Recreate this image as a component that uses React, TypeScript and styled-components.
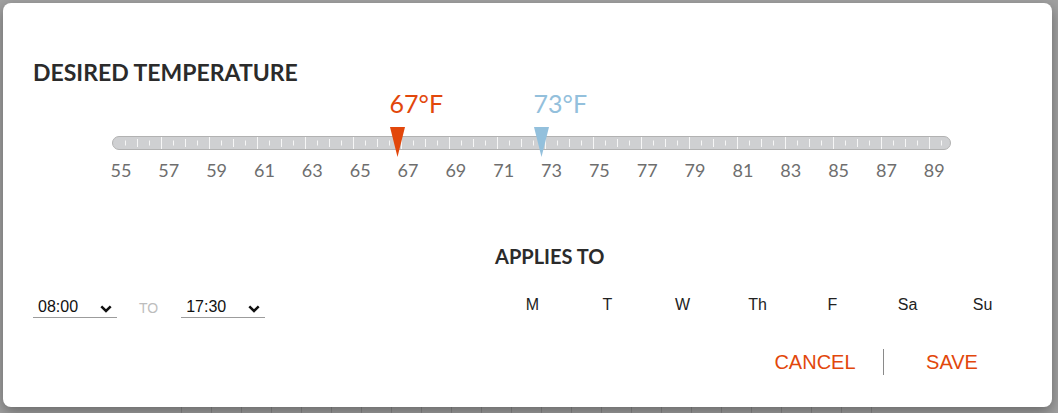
import React from 'react';
import styled, { createGlobalStyle } from 'styled-components';

const GlobalStyle = createGlobalStyle`
  html, body {
    margin: 0;
    padding: 0;
  }
  body {
    font-family: Lato, "Liberation Sans", sans-serif;
    background: #a1a1a1;
  }
`;

const MIN_TEMP = 55;
const MAX_TEMP = 89;
const PX_PER_DEG = 24;
const TRACK_WIDTH = 839;

const ORANGE = '#e2470b';
const BLUE = '#93c0dc';

const Page = styled.div`
  height: 413px;
  box-sizing: border-box;
  padding: 3px 6px 6px 3px;
  background-color: #a1a1a1;
  background-image: repeating-linear-gradient(
    90deg,
    rgba(0, 0, 0, 0.14) 0 1px,
    transparent 1px 30px
  );
  background-size: 720px 8px;
  background-position: 181px 100%;
  background-repeat: no-repeat;
`;

const Modal = styled.div`
  height: 100%;
  box-sizing: border-box;
  background: #fff;
  border-radius: 8px;
  box-shadow: 0 5px 14px rgba(0, 0, 0, 0.35);
  padding: 56px 30px 0 30px;
`;

const Title = styled.h2<{ $size: number; $line: number }>`
  margin: 0;
  font-family: Lato, "Liberation Sans", sans-serif;
  font-weight: 700;
  font-size: ${(p) => p.$size}px;
  line-height: ${(p) => p.$line}px;
  color: #2b2b2b;
`;

const SliderArea = styled.div`
  position: relative;
  width: ${TRACK_WIDTH}px;
  padding-top: 51px;
  margin-left: 79px;
`;

const ValueLabel = styled.div<{ $color: string }>`
  position: absolute;
  top: 3px;
  font-family: Lato, "Liberation Sans", sans-serif;
  font-size: 25px;
  line-height: 30px;
  color: ${(p) => p.$color};
  white-space: nowrap;
`;

const Track = styled.div`
  height: 14px;
  box-sizing: border-box;
  border: 1px solid #b2b2b2;
  border-radius: 7px;
  background: #cfd0d2;
  overflow: hidden;

  svg {
    display: block;
  }
`;

const Thumb = styled.svg`
  position: absolute;
  top: 42px;
  width: 15px;
  height: 30px;
`;

const ScaleRow = styled.div`
  display: flex;
  margin-top: 9px;
  margin-left: -15px;
`;

const ScaleLabel = styled.span`
  flex: 0 0 47.85px;
  text-align: center;
  font-family: Lato, "Liberation Sans", sans-serif;
  font-size: 18px;
  line-height: 22px;
  color: #6e6e6e;
`;

const BottomRow = styled.div`
  display: flex;
  justify-content: space-between;
  margin-top: 63px;
  margin-right: 2px;
`;

const TimeRange = styled.div`
  display: flex;
  align-items: center;
  padding-top: 53px;
  align-self: flex-start;
`;

const SelectBox = styled.button`
  display: flex;
  align-items: center;
  justify-content: space-between;
  width: 84px;
  height: 21px;
  box-sizing: border-box;
  padding: 0 5px 0 5px;
  border: none;
  border-bottom: 1px solid #9c9c9c;
  background: transparent;
  font-family: "Liberation Sans", Arial, sans-serif;
  font-size: 16px;
  line-height: 20px;
  color: #111;
  cursor: pointer;

  svg {
    margin-top: 3px;
  }
`;

const ToLabel = styled.span`
  margin: 0 23px 0 22px;
  font-family: "Liberation Sans", Arial, sans-serif;
  font-size: 14px;
  line-height: 20px;
  color: #bdbdbd;
`;

const AppliesColumn = styled.div`
  display: flex;
  flex-direction: column;
  width: 525px;
`;

const DaysRow = styled.div`
  display: grid;
  grid-template-columns: repeat(7, 75px);
  margin-top: 25px;
`;

const Day = styled.span`
  text-align: center;
  font-family: "Liberation Sans", Arial, sans-serif;
  font-size: 16px;
  line-height: 24px;
  color: #222;
`;

const Actions = styled.div`
  display: flex;
  justify-content: flex-end;
  align-items: center;
  margin-top: 30px;
`;

const ActionButton = styled.button`
  width: 136px;
  height: 30px;
  padding: 0;
  border: none;
  background: transparent;
  font-family: "Liberation Sans", Arial, sans-serif;
  font-size: 20px;
  line-height: 30px;
  color: ${ORANGE};
  cursor: pointer;
`;

const Divider = styled.span`
  width: 1px;
  height: 26px;
  background: #8a8a8a;
`;

const tickX = (v: number) => (v - MIN_TEMP) * PX_PER_DEG - 3;

const Ticks = () => {
  const lines = [];
  for (let i = 1; i * 12 < TRACK_WIDTH - 6; i++) {
    const x = i * 12 + 0.5;
    const h = i % 4 === 0 ? 12 : i % 2 === 0 ? 8 : 5;
    const y = (12 - h) / 2;
    lines.push(<line key={i} x1={x} x2={x} y1={y} y2={y + h} stroke="#f6f6f6" strokeWidth={1} />);
  }
  return (
    <svg width={TRACK_WIDTH - 2} height={12}>
      {lines}
    </svg>
  );
};

const SliderThumb = ({ value, color }: { value: number; color: string }) => {
  const tip = tickX(value);
  return (
    <>
      <ValueLabel $color={color} style={{ left: tip - 7.5 }}>
        {value}°F
      </ValueLabel>
      <Thumb viewBox="0 0 15 30" style={{ left: tip - 7.5 }}>
        <polygon points="0,0 15,0 7.5,30" fill={color} />
      </Thumb>
    </>
  );
};

const Chevron = () => (
  <svg width="12" height="8" viewBox="0 0 12 8">
    <polyline points="1.3,1.3 6,6 10.7,1.3" fill="none" stroke="#111" strokeWidth="2.5" />
  </svg>
);

const TimeSelect = ({ value }: { value: string }) => (
  <SelectBox type="button">
    {value}
    <Chevron />
  </SelectBox>
);

const days = ['M', 'T', 'W', 'Th', 'F', 'Sa', 'Su'];

export default function App() {
  const scale = [];
  for (let t = MIN_TEMP; t <= MAX_TEMP; t += 2) scale.push(t);

  return (
    <>
      <GlobalStyle />
      <Page>
        <Modal>
          <Title $size={23} $line={26}>DESIRED TEMPERATURE</Title>
          <SliderArea>
            <Track>
              <Ticks />
            </Track>
            <SliderThumb value={67} color={ORANGE} />
            <SliderThumb value={73} color={BLUE} />
            <ScaleRow>
              {scale.map((t) => (
                <ScaleLabel key={t}>{t}</ScaleLabel>
              ))}
            </ScaleRow>
          </SliderArea>
          <BottomRow>
            <TimeRange>
              <TimeSelect value="08:00" />
              <ToLabel>TO</ToLabel>
              <TimeSelect value="17:30" />
            </TimeRange>
            <AppliesColumn>
              <Title $size={20} $line={24}>APPLIES TO</Title>
              <DaysRow>
                {days.map((d) => (
                  <Day key={d}>{d}</Day>
                ))}
              </DaysRow>
              <Actions>
                <ActionButton type="button">CANCEL</ActionButton>
                <Divider />
                <ActionButton type="button">SAVE</ActionButton>
              </Actions>
            </AppliesColumn>
          </BottomRow>
        </Modal>
      </Page>
    </>
  );
}
